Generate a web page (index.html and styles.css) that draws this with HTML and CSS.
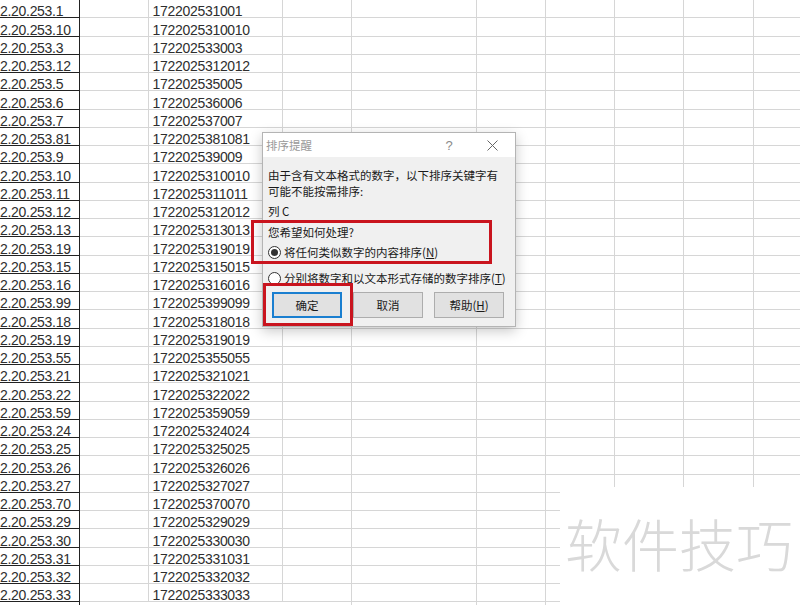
FILE: index.html
```html
<!DOCTYPE html>
<html lang="zh-CN">
	<head>
		<meta charset="UTF-8" />
		<meta name="viewport" content="width=device-width, initial-scale=1.0" />
		<title>排序提醒</title>
		<link rel="stylesheet" href="styles.css">
	</head>
	<body>
		<div class="sheet">
			<div class="row"><span class="ip">2.20.253.1</span><span class="blank"></span><span class="num">172202531001</span></div>
			<div class="row"><span class="ip">2.20.253.10</span><span class="blank"></span><span class="num">1722025310010</span></div>
			<div class="row"><span class="ip">2.20.253.3</span><span class="blank"></span><span class="num">172202533003</span></div>
			<div class="row"><span class="ip">2.20.253.12</span><span class="blank"></span><span class="num">1722025312012</span></div>
			<div class="row"><span class="ip">2.20.253.5</span><span class="blank"></span><span class="num">172202535005</span></div>
			<div class="row"><span class="ip">2.20.253.6</span><span class="blank"></span><span class="num">172202536006</span></div>
			<div class="row"><span class="ip">2.20.253.7</span><span class="blank"></span><span class="num">172202537007</span></div>
			<div class="row"><span class="ip">2.20.253.81</span><span class="blank"></span><span class="num">1722025381081</span></div>
			<div class="row"><span class="ip">2.20.253.9</span><span class="blank"></span><span class="num">172202539009</span></div>
			<div class="row"><span class="ip">2.20.253.10</span><span class="blank"></span><span class="num">1722025310010</span></div>
			<div class="row"><span class="ip">2.20.253.11</span><span class="blank"></span><span class="num">1722025311011</span></div>
			<div class="row"><span class="ip">2.20.253.12</span><span class="blank"></span><span class="num">1722025312012</span></div>
			<div class="row"><span class="ip">2.20.253.13</span><span class="blank"></span><span class="num">1722025313013</span></div>
			<div class="row"><span class="ip">2.20.253.19</span><span class="blank"></span><span class="num">1722025319019</span></div>
			<div class="row"><span class="ip">2.20.253.15</span><span class="blank"></span><span class="num">1722025315015</span></div>
			<div class="row"><span class="ip">2.20.253.16</span><span class="blank"></span><span class="num">1722025316016</span></div>
			<div class="row"><span class="ip">2.20.253.99</span><span class="blank"></span><span class="num">1722025399099</span></div>
			<div class="row"><span class="ip">2.20.253.18</span><span class="blank"></span><span class="num">1722025318018</span></div>
			<div class="row"><span class="ip">2.20.253.19</span><span class="blank"></span><span class="num">1722025319019</span></div>
			<div class="row"><span class="ip">2.20.253.55</span><span class="blank"></span><span class="num">1722025355055</span></div>
			<div class="row"><span class="ip">2.20.253.21</span><span class="blank"></span><span class="num">1722025321021</span></div>
			<div class="row"><span class="ip">2.20.253.22</span><span class="blank"></span><span class="num">1722025322022</span></div>
			<div class="row"><span class="ip">2.20.253.59</span><span class="blank"></span><span class="num">1722025359059</span></div>
			<div class="row"><span class="ip">2.20.253.24</span><span class="blank"></span><span class="num">1722025324024</span></div>
			<div class="row"><span class="ip">2.20.253.25</span><span class="blank"></span><span class="num">1722025325025</span></div>
			<div class="row"><span class="ip">2.20.253.26</span><span class="blank"></span><span class="num">1722025326026</span></div>
			<div class="row"><span class="ip">2.20.253.27</span><span class="blank"></span><span class="num">1722025327027</span></div>
			<div class="row"><span class="ip">2.20.253.70</span><span class="blank"></span><span class="num">1722025370070</span></div>
			<div class="row"><span class="ip">2.20.253.29</span><span class="blank"></span><span class="num">1722025329029</span></div>
			<div class="row"><span class="ip">2.20.253.30</span><span class="blank"></span><span class="num">1722025330030</span></div>
			<div class="row"><span class="ip">2.20.253.31</span><span class="blank"></span><span class="num">1722025331031</span></div>
			<div class="row"><span class="ip">2.20.253.32</span><span class="blank"></span><span class="num">1722025332032</span></div>
			<div class="row"><span class="ip">2.20.253.33</span><span class="blank"></span><span class="num">1722025333033</span></div>
		</div>

		<div class="dialog">
			<div class="titlebar">
				<span class="title">排序提醒</span>
				<span class="help">?</span>
				<span class="close">
					<svg width="11" height="11" viewBox="0 0 11 11"><path d="M0.5 0.5L10.5 10.5M10.5 0.5L0.5 10.5" stroke="#666" stroke-width="1" fill="none" /></svg>
				</span>
			</div>
			<div class="content">
				<p class="msg">由于含有文本格式的数字，以下排序关键字有<br>可能不能按需排序:</p>
				<p class="col">列 C</p>
				<p class="ask">您希望如何处理?</p>
				<div class="radio checked"><span class="dot"></span>将任何类似数字的内容排序(<u>N</u>)</div>
				<div class="radio second"><span class="dot"></span>分别将数字和以文本形式存储的数字排序(<u>T</u>)</div>
				<div class="buttons">
					<button class="default">确定</button>
					<button>取消</button>
					<button>帮助(<u>H</u>)</button>
				</div>
			</div>
		</div>

		<!-- red annotation boxes -->
		<div class="mark mark-choice"></div>
		<div class="mark mark-ok"></div>

		<div class="watermark">软件技巧</div>
	</body>
</html>
```

FILE: styles.css
```css
body {
	margin: 0;
	width: 800px;
	height: 605px;
	overflow: hidden;
	position: relative;
	background-color: #fff;
	font-family: "Liberation Sans", Arial, sans-serif;
}
.sheet {
	width: 800px;
	height: 605px;
	background-color: #fff;
	/* gridlines of the empty columns */
	background-image:
		linear-gradient(#d6d6d6, #d6d6d6),
		linear-gradient(#d6d6d6, #d6d6d6),
		linear-gradient(#d6d6d6, #d6d6d6),
		linear-gradient(#d6d6d6, #d6d6d6),
		linear-gradient(#d6d6d6, #d6d6d6),
		linear-gradient(#d6d6d6, #d6d6d6),
		linear-gradient(#222, #222);
	background-size: 1px 100%, 1px 100%, 1px 100%, 1px 100%, 1px 100%, 1px 100%, 1px 100%;
	background-position: 351px 0, 476px 0, 545px 0, 614px 0, 683px 0, 753px 0, 79px 0;
	background-repeat: no-repeat;
}
.row {
	display: flex;
	height: 18.25px;
	box-sizing: border-box;
	border-bottom: 1px solid #d6d6d6;
	font-size: 14px;
	letter-spacing: -0.3px;
	line-height: 13px;
	color: #2e2e2e;
}
.row span {
	box-sizing: border-box;
	white-space: nowrap;
	padding-top: 5.3px;
}
.ip {
	width: 80px;
	margin-bottom: -1px;
	border-right: 1px solid #222;
	border-bottom: 1px solid #222;
}
.blank {
	width: 69px;
	border-right: 1px solid #d6d6d6;
}
.num {
	width: 134px;
	padding-left: 3.5px;
	border-right: 1px solid #d6d6d6;
}

/* dialog */
.dialog {
	position: absolute;
	left: 262px;
	top: 132px;
	width: 254px;
	box-sizing: border-box;
	border: 1px solid #b4b4b4;
	background-color: #f0f0f0;
	box-shadow: 0 4px 12px rgba(0, 0, 0, 0.22);
	font-family: "Noto Sans CJK SC", "Liberation Sans", sans-serif;
	font-size: 11.5px;
	color: #1a1a1a;
}
.titlebar {
	display: flex;
	align-items: center;
	height: 24px;
	background-color: #fff;
	padding-right: 9px;
}
.title {
	flex: 1;
	padding-left: 3px;
	color: #9a9a9a;
}
.help {
	width: 20px;
	text-align: center;
	color: #8a8a8a;
	font-family: "Liberation Sans", sans-serif;
	font-size: 13px;
}
.close {
	display: flex;
	justify-content: center;
	width: 28px;
	margin-left: 19px;
}
.content {
	padding: 10px 5px 8px 5px;
}
.content p {
	margin: 0;
	line-height: 16px;
}
.col {
	margin-top: 4px !important;
}
.ask {
	margin-top: 5px !important;
}
.radio {
	display: flex;
	align-items: center;
	height: 16px;
	margin-top: 4px;
}
.radio.second {
	margin-top: 10px;
}
.dot {
	width: 13px;
	height: 13px;
	box-sizing: border-box;
	border: 1px solid #333;
	border-radius: 50%;
	background-color: #fff;
	margin-right: 3px;
	display: flex;
	align-items: center;
	justify-content: center;
}
.radio.checked .dot::after {
	content: "";
	width: 7px;
	height: 7px;
	border-radius: 50%;
	background-color: #333;
}
.buttons {
	display: flex;
	gap: 11px;
	margin-top: 6px;
	padding-left: 4px;
}
button {
	width: 70px;
	height: 26px;
	padding: 0;
	font-family: inherit;
	font-size: 11.5px;
	color: #1a1a1a;
	background-color: #e1e1e1;
	border: 1px solid #adadad;
	border-radius: 0;
}
button.default {
	border: 2px solid #1a7fd0;
}

/* annotations */
.mark {
	position: absolute;
	box-sizing: border-box;
	border: 3px solid #c9141e;
}
.mark-choice {
	left: 251px;
	top: 220px;
	width: 241px;
	height: 44px;
}
.mark-ok {
	left: 263px;
	top: 283px;
	width: 90px;
	height: 43px;
}
.watermark {
	position: absolute;
	left: 560px;
	top: 487px;
	width: 240px;
	height: 118px;
	box-sizing: border-box;
	padding: 25px 0 0 5px;
	background-color: #fff;
	font-family: "Noto Sans CJK SC", sans-serif;
	font-weight: 300;
	font-size: 57px;
	line-height: 60px;
	color: #d9d9d9;
	white-space: nowrap;
}
```
